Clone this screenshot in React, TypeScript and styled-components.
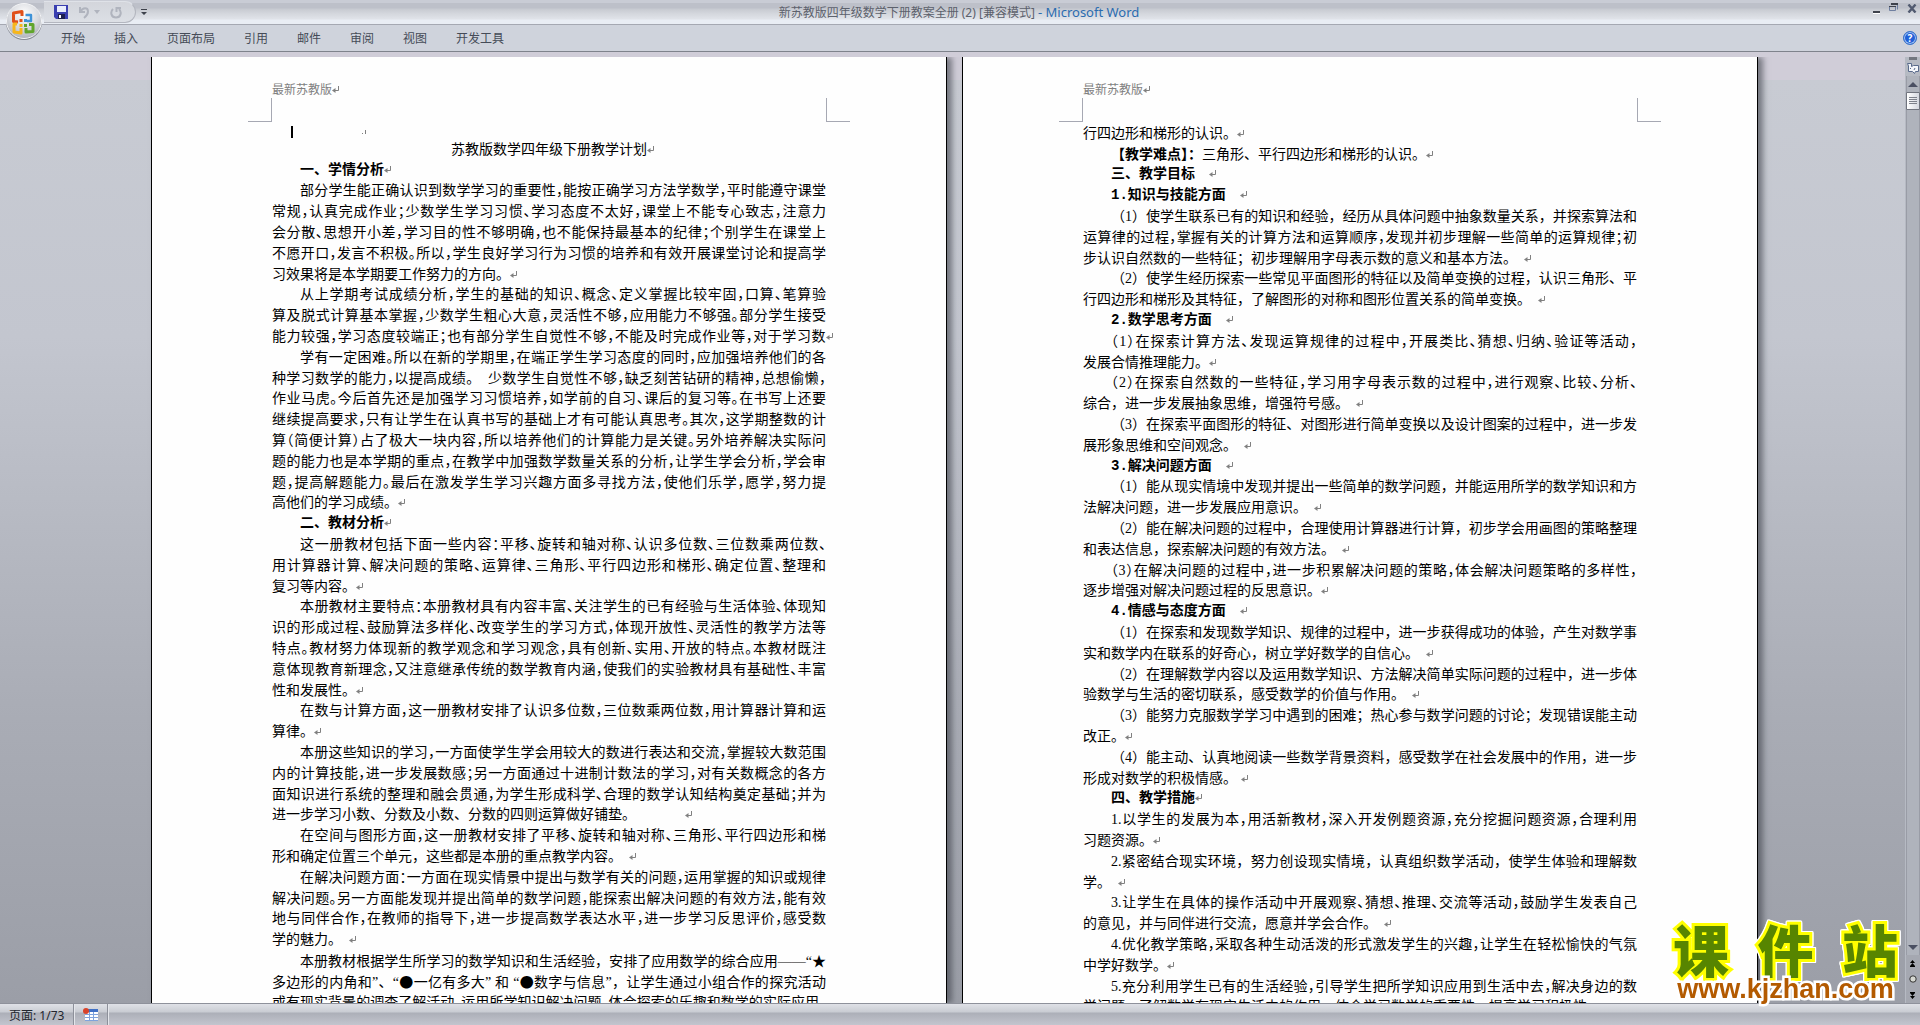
import React from "react";
import styled, { createGlobalStyle, css } from "styled-components";

const GlobalStyle = createGlobalStyle`
  * { box-sizing: border-box; }
  html, body { margin: 0; padding: 0; }
  body { overflow: hidden; font-family: "Noto Sans", "Noto Sans CJK SC", sans-serif; font-size: 12px; }
  button { margin: 0; padding: 0; border: 0; background: none; font: inherit; color: inherit; }
`;

const Window = styled.div`
  display: flex;
  flex-direction: column;
  height: 100vh;
  background: #c8cbd3;
`;

/* ---------- title bar and ribbon ---------- */

const Top = styled.header`
  position: relative;
  flex: none;
`;

const TitleBar = styled.div`
  display: flex;
  align-items: center;
  height: 25px;
  border-bottom: 1px solid #a5a8b2;
  background: linear-gradient(#c9ccd5 0 3px, #bdc0c9 3px 8px, #c7cad1 9px, #d5d8de 14px, #e0e3e9 19px, #e9edf4 20px 24px);
`;

const OfficeButton = styled.button`
  position: absolute;
  left: 4px;
  top: 2px;
  width: 40px;
  height: 40px;
  svg { display: block; }
`;

const QuickAccess = styled.div`
  display: flex;
  align-items: center;
  height: 22px;
  width: 92px;
  margin-left: 44px;
  padding-left: 10px;
  gap: 10px;
  border: 1px solid #b3b6bf;
  border-top-color: #dfe2e8;
  border-left: 0;
  border-radius: 0 11px 11px 0;
  background: linear-gradient(#d3d5db, #dcdfe5);
  button { display: flex; }
`;

const Customize = styled.button`
  display: flex;
  margin-left: 5px;
`;

const Caption = styled.h1`
  flex: 1;
  margin: 0;
  padding-left: 1px;
  font-size: 12px;
  font-weight: 400;
  text-align: center;
  color: #5c616c;
  span { font-size: 13px; color: #2b6cb0; }
`;

const WindowButtons = styled.div`
  display: flex;
  align-items: center;
  justify-content: flex-end;
  gap: 8px;
  width: 150px;
  height: 16px;
  padding-right: 2px;
  align-self: flex-start;
  button { display: flex; }
`;

const Ribbon = styled.nav`
  display: flex;
  align-items: center;
  gap: 29px;
  height: 27px;
  padding: 0 3px 0 61px;
  border-bottom: 1px solid #7f838c;
  background: #cfd3dc;
  color: #454b57;
`;

const Help = styled.button`
  width: 14px;
  height: 14px;
  margin-left: auto;
  border: 1px solid #3c74c8;
  border-radius: 50%;
  background: #2160d8;
  box-shadow: inset 0 0 0 1px #a9c8f5;
  color: #fff;
  font-size: 10px;
  font-weight: 700;
  line-height: 12px;
`;

/* ---------- document area ---------- */

const Workspace = styled.main`
  display: flex;
  flex: 1;
  min-height: 0;
  padding-top: 5px;
  background: linear-gradient(#d0cdd8 0 28px, #c8cbd3 28px, #c3c6cf 30%, #a9acb5 70%, #9b9ea7);
`;

const Desk = styled.div`
  display: flex;
  flex: 1;
  justify-content: center;
  gap: 15px;
  min-width: 0;
  padding-left: 4px;
  overflow: hidden;
`;

const Paper = styled.article`
  flex: none;
  width: 796px;
  padding: 23px 120px 0;
  border: solid #000;
  border-width: 0 1px;
  background: #fefefe;
  box-shadow: 5px 0 6px rgba(60, 63, 72, 0.6);
  color: #000;
  font-family: "Liberation Serif", "Noto Sans CJK SC", sans-serif;
  font-size: 14px;
`;

const PageHeader = styled.div`
  height: 18px;
  line-height: 21px;
  font-size: 12px;
  color: #808080;
`;

const Corners = styled.div`
  display: flex;
  justify-content: space-between;
  height: 25px;
  margin: 0 -24px;
`;

const Corner = styled.span<{ $side: "left" | "right" }>`
  width: 24px;
  height: 24px;
  border: solid #a6a8b3;
  border-width: ${(p) => (p.$side === "left" ? "0 1px 1px 0" : "0 0 1px 1px")};
`;

const CaretRow = styled.div`
  display: flex;
  align-items: center;
  gap: 69px;
  height: 16px;
  padding: 2px 0 0 19px;
`;

const Caret = styled.span`
  width: 2px;
  height: 12px;
  background: #000;
`;

const Lines = styled.div``;

type Kind = "full" | "last" | "title";

const Line = styled.div<{ $kind: Kind; $indent: boolean; $bold: boolean; $dense: boolean }>`
  height: 21px;
  line-height: 21px;
  white-space: nowrap;
  text-indent: ${(p) => (p.$indent ? "28px" : "0")};
  ${(p) => p.$bold && css`font-family: "Liberation Mono", "Noto Sans CJK SC", monospace; font-weight: 700;`}
  ${(p) => p.$kind === "full" && css`text-align-last: justify;`}
  ${(p) => p.$kind === "title" && css`text-align: center;`}
  ${(p) => p.$dense && css`font-feature-settings: "halt";`}
  &:nth-child(5n + 2) { height: 20px; }
`;

const Symbol = styled.span`
  font-family: "Noto Sans CJK SC", sans-serif;
`;

const Mark = styled.svg`
  width: 8px;
  height: 8px;
  margin-right: -8px;
`;

const Return = () => (
  <Mark viewBox="0 0 8 8" aria-hidden="true">
    <path d="M6.5 0v4.5H2" fill="none" stroke="#808080" />
    <path d="M3.5 2v5L0 4.5z" fill="#808080" />
  </Mark>
);

/* ---------- scroll bar ---------- */

const ScrollColumn = styled.aside`
  display: flex;
  flex-direction: column;
  align-items: center;
  width: 15px;
  background: #b6bac3;
  button { display: flex; align-items: center; justify-content: center; width: 14px; height: 16px; }
`;

const Splitter = styled.span`
  flex: none;
  width: 8px;
  height: 3px;
  background: #73767f;
`;

const Track = styled.div`
  display: flex;
  flex-direction: column;
  align-items: center;
  flex: 1;
  width: 14px;
  border: solid #999ca6;
  border-width: 0 1px;
  background: #afb3bc;
  button:last-child { margin-top: auto; }
`;

const Thumb = styled.button`
  && {
    height: 18px;
    border: 1px solid #70747e;
    border-radius: 1px;
    background: linear-gradient(90deg, #fff, #d5d8e0);
  }
`;

const Browse = styled.div`
  display: flex;
  flex-direction: column;
  height: 48px;
  background: #a5a8b1;
`;

/* ---------- status bar ---------- */

const StatusBar = styled.footer`
  display: flex;
  flex: none;
  height: 22px;
  border-top: 1px solid #8e919b;
  background: linear-gradient(#dfe1e7, #c9ccd3 8px, #acafb8 9px, #c3c5ce);
  color: #22262e;
`;

const StatusItem = styled.div`
  display: flex;
  align-items: center;
  padding: 0 9px;
  border-right: 1px solid #8d909a;
  box-shadow: 1px 0 #e4e6eb;
`;

/* ---------- site stamp ---------- */

const Stamp = styled.div`
  position: fixed;
  right: 22px;
  bottom: 21px;
  width: 225px;
`;

const StampName = styled.div`
  height: 50px;
  font-family: "Noto Sans CJK SC", sans-serif;
  font-size: 56px;
  font-weight: 900;
  line-height: 48px;
  color: #578500;
  text-align-last: justify;
  -webkit-text-stroke: 6px #ffff00;
  paint-order: stroke fill;
  filter: drop-shadow(1px 0 #fff) drop-shadow(-1px 0 #fff) drop-shadow(0 1px #fff) drop-shadow(0 -1px #fff);
`;

const StampUrl = styled.a`
  display: block;
  position: relative;
  font-family: "Liberation Sans", sans-serif;
  font-size: 27px;
  font-weight: 700;
  line-height: 30px;
  text-align: center;
  color: #b35a00;
  text-decoration: none;
  -webkit-text-stroke: 5px #fff;
  paint-order: stroke fill;
`;

/* ---------- text ---------- */

/* prefix: ">" first line of a paragraph, "#" bold heading, "=" centred title;
   a trailing "¶" ends the paragraph */
const LEFT = `
=苏教版数学四年级下册教学计划¶
#一、学情分析¶
>部分学生能正确认识到数学学习的重要性，能按正确学习方法学数学，平时能遵守课堂
常规，认真完成作业；少数学生学习习惯、学习态度不太好，课堂上不能专心致志，注意力
会分散、思想开小差，学习目的性不够明确，也不能保持最基本的纪律；个别学生在课堂上
不愿开口，发言不积极。所以，学生良好学习行为习惯的培养和有效开展课堂讨论和提高学
习效果将是本学期要工作努力的方向。¶
>从上学期考试成绩分析，学生的基础的知识、概念、定义掌握比较牢固，口算、笔算验
算及脱式计算基本掌握，少数学生粗心大意，灵活性不够，应用能力不够强。部分学生接受
能力较强，学习态度较端正；也有部分学生自觉性不够，不能及时完成作业等，对于学习数|¶
>学有一定困难。所以在新的学期里，在端正学生学习态度的同时，应加强培养他们的各
种学习数学的能力，以提高成绩。　少数学生自觉性不够，缺乏刻苦钻研的精神，总想偷懒，
作业马虎。今后首先还是加强学习习惯培养，如学前的自习、课后的复习等。在书写上还要
继续提高要求，只有让学生在认真书写的基础上才有可能认真思考。其次，这学期整数的计
算（简便计算）占了极大一块内容，所以培养他们的计算能力是关键。另外培养解决实际问
题的能力也是本学期的重点，在教学中加强数学数量关系的分析，让学生学会分析，学会审
题，提高解题能力。最后在激发学生学习兴趣方面多寻找方法，使他们乐学，愿学，努力提
高他们的学习成绩。¶
#二、教材分析¶
>这一册教材包括下面一些内容：平移、旋转和轴对称、认识多位数、三位数乘两位数、
用计算器计算、解决问题的策略、运算律、三角形、平行四边形和梯形、确定位置、整理和
复习等内容。¶
>本册教材主要特点：本册教材具有内容丰富、关注学生的已有经验与生活体验、体现知
识的形成过程、鼓励算法多样化、改变学生的学习方式，体现开放性、灵活性的教学方法等
特点。教材努力体现新的教学观念和学习观念，具有创新、实用、开放的特点。本教材既注
意体现教育新理念，又注意继承传统的数学教育内涵，使我们的实验教材具有基础性、丰富
性和发展性。¶
>在数与计算方面，这一册教材安排了认识多位数，三位数乘两位数，用计算器计算和运
算律。¶
>本册这些知识的学习，一方面使学生学会用较大的数进行表达和交流，掌握较大数范围
内的计算技能，进一步发展数感；另一方面通过十进制计数法的学习，对有关数概念的各方
面知识进行系统的整理和融会贯通，为学生形成科学、合理的数学认知结构奠定基础；并为
进一步学习小数、分数及小数、分数的四则运算做好铺垫。　　　　¶
>在空间与图形方面，这一册教材安排了平移、旋转和轴对称、三角形、平行四边形和梯
形和确定位置三个单元，这些都是本册的重点教学内容。　¶
>在解决问题方面：一方面在现实情景中提出与数学有关的问题，运用掌握的知识或规律
解决问题。另一方面能发现并提出简单的数学问题，能探索出解决问题的有效方法，能有效
地与同伴合作，在教师的指导下，进一步提高数学表达水平，进一步学习反思评价，感受数
学的魅力。　¶
>本册教材根据学生所学习的数学知识和生活经验，安排了应用数学的综合应用——“★
多边形的内角和”、“●一亿有多大” 和 “●数字与信息”，让学生通过小组合作的探究活动
或有现实背景的调查了解活动，运用所学知识解决问题，体会探索的乐趣和数学的实际应用。
`;

const RIGHT = `
行四边形和梯形的认识。¶
>*【教学难点】：*三角形、平行四边形和梯形的认识。¶
#三、教学目标　¶
#1.知识与技能方面　¶
>（1）使学生联系已有的知识和经验，经历从具体问题中抽象数量关系，并探索算法和
运算律的过程，掌握有关的计算方法和运算顺序，发现并初步理解一些简单的运算规律；初
步认识自然数的一些特征；初步理解用字母表示数的意义和基本方法。　¶
>（2）使学生经历探索一些常见平面图形的特征以及简单变换的过程，认识三角形、平
行四边形和梯形及其特征，了解图形的对称和图形位置关系的简单变换。　¶
#2.数学思考方面　¶
>（1）在探索计算方法、发现运算规律的过程中，开展类比、猜想、归纳、验证等活动，
发展合情推理能力。¶
>（2）在探索自然数的一些特征，学习用字母表示数的过程中，进行观察、比较、分析、
综合，进一步发展抽象思维，增强符号感。　¶
>（3）在探索平面图形的特征、对图形进行简单变换以及设计图案的过程中，进一步发
展形象思维和空间观念。　¶
#3.解决问题方面　¶
>（1）能从现实情境中发现并提出一些简单的数学问题，并能运用所学的数学知识和方
法解决问题，进一步发展应用意识。　¶
>（2）能在解决问题的过程中，合理使用计算器进行计算，初步学会用画图的策略整理
和表达信息，探索解决问题的有效方法。　¶
>（3）在解决问题的过程中，进一步积累解决问题的策略，体会解决问题策略的多样性，
逐步增强对解决问题过程的反思意识。¶
#4.情感与态度方面　¶
>（1）在探索和发现数学知识、规律的过程中，进一步获得成功的体验，产生对数学事
实和数学内在联系的好奇心，树立学好数学的自信心。　¶
>（2）在理解数学内容以及运用数学知识、方法解决简单实际问题的过程中，进一步体
验数学与生活的密切联系，感受数学的价值与作用。　¶
>（3）能努力克服数学学习中遇到的困难；热心参与数学问题的讨论；发现错误能主动
改正。¶
>（4）能主动、认真地阅读一些数学背景资料，感受数学在社会发展中的作用，进一步
形成对数学的积极情感。 ¶
#四、教学措施¶
>1.以学生的发展为本，用活新教材，深入开发例题资源，充分挖掘问题资源，合理利用
习题资源。¶
>2.紧密结合现实环境，努力创设现实情境，认真组织数学活动，使学生体验和理解数
学。　¶
>3.让学生在具体的操作活动中开展观察、猜想、推理、交流等活动，鼓励学生发表自己
的意见，并与同伴进行交流，愿意并学会合作。　¶
>4.优化教学策略，采取各种生动活泼的形式激发学生的兴趣，让学生在轻松愉快的气氛
中学好数学。¶
>5.充分利用学生已有的生活经验，引导学生把所学知识应用到生活中去，解决身边的数
学问题，了解数学在现实生活中的作用，体会学习数学的重要性，提高学习积极性。¶
`;

/* width of a line in full-width characters */
const measure = (s: string) =>
  [...s].reduce((w, c) => w + (/[\x20-\x7e“”]/.test(c) ? 0.5 : 1), 0);

const LINE_CAPACITY = 39.5;

const withSymbols = (s: string) =>
  s.split(/([★●])/).map((part, i) => (i % 2 ? <Symbol key={i}>{part}</Symbol> : part));

const DocLine = ({ src }: { src: string }) => {
  const title = src.startsWith("=");
  const bold = src.startsWith("#");
  const indent = bold || src.startsWith(">");
  const ends = src.endsWith("¶");
  const stretched = src.endsWith("|¶");
  const body = src.replace(/^[=#>]/, "").replace(/\|?¶$/, "");
  const kind: Kind = title ? "title" : ends && !stretched ? "last" : "full";
  const dense = kind === "full" && measure(body) + (indent ? 2 : 0) > LINE_CAPACITY;
  return (
    <Line $kind={kind} $indent={indent} $bold={bold} $dense={dense}>
      {body.split("*").map((part, i) => (i % 2 ? <b key={i}>{part}</b> : withSymbols(part)))}
      {ends && <Return />}
    </Line>
  );
};

const Sheet = ({ text, caret }: { text: string; caret?: boolean }) => (
  <Paper>
    <PageHeader>最新苏教版<Return /></PageHeader>
    <Corners>
      <Corner $side="left" />
      <Corner $side="right" />
    </Corners>
    {caret && (
      <CaretRow>
        <Caret />
        <svg width="4" height="4" aria-hidden="true">
          <path d="M0 3h1v1H0zM3 0h1v4H3z" fill="#808080" />
        </svg>
      </CaretRow>
    )}
    <Lines>
      {text.trim().split("\n").map((l, i) => <DocLine key={i} src={l} />)}
    </Lines>
  </Paper>
);

const TABS = ["开始", "插入", "页面布局", "引用", "邮件", "审阅", "视图", "开发工具"];

const OfficeLogo = () => (
  <svg width="40" height="40" viewBox="0 0 40 40" aria-hidden="true">
    <defs>
      <radialGradient id="orb" cx="50%" cy="30%" r="75%">
        <stop offset="0" stopColor="#fff" />
        <stop offset="0.55" stopColor="#d8dadf" />
        <stop offset="1" stopColor="#a9acb5" />
      </radialGradient>
    </defs>
    <circle cx="20" cy="20" r="18" fill="#858993" />
    <circle cx="20" cy="19" r="17.5" fill="url(#orb)" stroke="#f4f5f7" />
    <g fill="none" strokeWidth="3" strokeLinejoin="round">
      <path d="M18 14V9.500L9.500 11v8.500l4.500.5" stroke="#e0501a" />
      <path d="M21.500 13h5.500v6h-4" stroke="#3f93d8" strokeWidth="2.400" />
      <path d="M13 22h-3v8l7 1v-5" stroke="#f6b61c" />
      <path d="M22 26v4l7-.5v-7h-4" stroke="#61a52c" />
    </g>
    <g>
      <rect x="15.500" y="17" width="3" height="3" fill="#e0501a" />
      <rect x="20" y="17" width="3" height="3" fill="#3f93d8" />
      <rect x="15.500" y="22" width="3" height="3" fill="#f6b61c" />
      <rect x="20" y="22" width="3" height="3" fill="#61a52c" />
    </g>
  </svg>
);

const Arrow = ({ up }: { up?: boolean }) => (
  <svg width="10" height="5" aria-hidden="true">
    <path d={up ? "M0 5l5-5 5 5z" : "M0 0h10l-5 5z"} fill="#4b5062" />
  </svg>
);

export default function App() {
  return (
    <Window>
      <GlobalStyle />
      <Top>
        <TitleBar>
          <QuickAccess>
            <button aria-label="保存">
              <svg width="14" height="14" viewBox="0 0 14 14">
                <path d="M0 0h14v14H2l-2-2z" fill="#3a3fb0" />
                <path d="M3 1h9v6H3z" fill="#e9eefc" />
                <path d="M4 9h7v5H4z" fill="#1c1f4e" />
                <path d="M5 10h2v3H5z" fill="#fff" />
              </svg>
            </button>
            <button aria-label="撤消">
              <svg width="22" height="13" viewBox="0 0 22 13">
                <path d="M2 1v5h5M2.500 5.500C5 1 10 1.500 10 5.500c0 3-2 5-4 6.500" fill="none" stroke="#b0b4be" strokeWidth="2" />
                <path d="M16 4h6l-3 4z" fill="#b0b4be" />
              </svg>
            </button>
            <button aria-label="恢复">
              <svg width="12" height="13" viewBox="0 0 12 13">
                <path d="M3 3C0 6 1 11.500 6 11.500S12 6 9 3M6 2h5M6.500 1v5" fill="none" stroke="#b0b4be" strokeWidth="2" />
              </svg>
            </button>
          </QuickAccess>
          <Customize aria-label="自定义快速访问工具栏">
            <svg width="6" height="6"><path d="M0 0h6v1H0zM0 3h6L3 6z" fill="#3e424c" /></svg>
          </Customize>
          <Caption>
            新苏教版四年级数学下册教案全册 (2) [兼容模式] <span>- Microsoft Word</span>
          </Caption>
          <WindowButtons>
            <button aria-label="最小化">
              <svg width="8" height="14"><path d="M0 10h7v2H0z" fill="#3e424c" /><path d="M0 12h7v1H0z" fill="#fff" /></svg>
            </button>
            <button aria-label="还原">
              <svg width="10" height="10" viewBox="0 0 10 10">
                <path d="M2.500 1.500h6v5M.5 3.500h6v4h-6z" fill="none" stroke="#6f7fa0" />
                <path d="M2 0h7v2H2zM0 3h7v1H0z" fill="#3e424c" />
              </svg>
            </button>
            <button aria-label="关闭">
              <svg width="11" height="9" viewBox="0 0 11 9"><path d="M1.500.5l7 8M8.500.5l-7 8" stroke="#515a70" strokeWidth="2.400" /></svg>
            </button>
          </WindowButtons>
        </TitleBar>
        <Ribbon>
          {TABS.map((t) => <button key={t}>{t}</button>)}
          <Help aria-label="帮助">?</Help>
        </Ribbon>
        <OfficeButton aria-label="Office"><OfficeLogo /></OfficeButton>
      </Top>

      <Workspace>
        <Desk>
          <Sheet text={LEFT} caret />
          <Sheet text={RIGHT} />
        </Desk>
        <ScrollColumn>
          <Splitter />
          <button aria-label="标尺">
            <svg width="12" height="12" viewBox="0 0 12 12">
              <path d="M.5 1.500h4v3l2-1h5v6h-3l-1 2-2-2h-4V4z" fill="#f4f6fa" stroke="#5a6b8c" />
              <path d="M3 6l1 1M8 6l-1 2" stroke="#5a6b8c" />
            </svg>
          </button>
          <Track>
            <button aria-label="向上滚动"><Arrow up /></button>
            <Thumb aria-label="滚动块">
              <svg width="8" height="8"><path d="M0 0h8v1H0zM0 2h8v1H0zM0 4h8v1H0zM0 6h8v1H0z" fill="#7d818b" /></svg>
            </Thumb>
            <button aria-label="向下滚动"><Arrow /></button>
          </Track>
          <Browse>
            <button aria-label="前一页">
              <svg width="7" height="7"><path d="M3.500 0L6 3H1zM3.500 3L6 6H1zM1 6h5v1H1z" fill="#000" /></svg>
            </button>
            <button aria-label="选择浏览对象">
              <svg width="8" height="8"><circle cx="4" cy="4" r="3.200" fill="#d6d8d2" stroke="#333" /></svg>
            </button>
            <button aria-label="下一页">
              <svg width="7" height="7"><path d="M1 0h5v1H1zM1 1h5L3.500 4zM1 4h5L3.500 7z" fill="#000" /></svg>
            </button>
          </Browse>
        </ScrollColumn>
      </Workspace>

      <StatusBar>
        <StatusItem>页面: 1/73</StatusItem>
        <StatusItem>
          <svg width="15" height="13" viewBox="0 0 15 13" aria-hidden="true">
            <path d="M2 1h13v12H2z" fill="#fff" />
            <path d="M2 1h13v3H2z" fill="#3f6fc4" />
            <path d="M2 6.500h13M2 9.500h13M6.500 4v9M10.500 4v9M2 12.500h13" stroke="#7fa3dc" />
            <circle cx="3" cy="3" r="3" fill="#d8432a" />
          </svg>
        </StatusItem>
      </StatusBar>

      <Stamp>
        <StampName>课件站</StampName>
        <StampUrl href="#">www.kjzhan.com</StampUrl>
      </Stamp>
    </Window>
  );
}
